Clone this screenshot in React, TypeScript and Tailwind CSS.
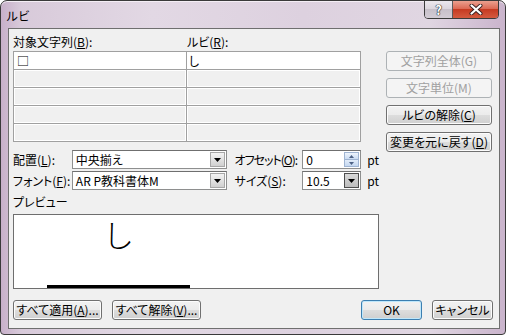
import React from 'react';

type BtnProps = {
  children: React.ReactNode;
  className?: string;
  disabled?: boolean;
  primary?: boolean;
};

const Btn: React.FC<BtnProps> = ({ children, className = '', disabled, primary }) => {
  if (disabled) {
    return (
      <div
        className={`h-[20px] flex items-center justify-center rounded-[3px] border border-[#adb2b5] bg-[#f4f4f4] text-[#a0a0a0] whitespace-nowrap ${className}`}
      >
        {children}
      </div>
    );
  }
  return (
    <div
      className={`h-[20px] flex items-center justify-center rounded-[3px] border whitespace-nowrap text-black bg-[linear-gradient(180deg,#f2f2f2_0%,#ebebeb_50%,#dddddd_50%,#cfcfcf_100%)] ${
        primary
          ? 'border-[#3c7fb1] shadow-[inset_0_0_0_1px_#bfe7fb]'
          : 'border-[#707070] shadow-[inset_0_0_0_1px_#fcfcfc]'
      } ${className}`}
    >
      {children}
    </div>
  );
};

const U: React.FC<{ children: React.ReactNode }> = ({ children }) => (
  <span className="underline underline-offset-[1px] decoration-1">{children}</span>
);

const DropArrow: React.FC<{ pressed?: boolean }> = ({ pressed }) => (
  <div
    className={`w-[15px] h-[15px] flex items-center justify-center border ${
      pressed
        ? 'border-[#4d4d4d] bg-[linear-gradient(180deg,#d8d8d8,#bdbdbd)]'
        : 'border-[#a7a7a7] bg-[linear-gradient(180deg,#f3f3f3_0%,#e2e2e2_50%,#d0d0d0_100%)]'
    }`}
  >
    <svg width="7" height="4" viewBox="0 0 7 4">
      <path d="M0 0h7L3.5 4z" fill="#000" />
    </svg>
  </div>
);

const Combo: React.FC<{ value: string; className?: string; pressed?: boolean }> = ({ value, className = '', pressed }) => (
  <div
    className={`h-[19px] flex items-center p-px bg-white border border-[#8e8f8f] border-t-[#6f6f6f] ${className}`}
  >
    <span className="flex-1 pl-[2px] leading-[15px] whitespace-nowrap">{value}</span>
    <DropArrow pressed={pressed} />
  </div>
);

const Spin: React.FC<{ value: string }> = ({ value }) => (
  <div className="w-[59px] h-[19px] flex items-center p-px bg-white border border-[#8e8f8f] border-t-[#6f6f6f]">
    <span className="flex-1 pl-[2px] leading-[15px]">{value}</span>
    <div className="w-[15px] h-[15px] flex flex-col">
      <div className="h-[8px] flex items-center justify-center border border-[#9fb4d2] bg-[linear-gradient(180deg,#eef4fc,#c9dbf2)]">
        <svg width="5" height="3" viewBox="0 0 5 3">
          <path d="M0 3h5L2.5 0z" fill="#4d6185" />
        </svg>
      </div>
      <div className="h-[7px] flex items-center justify-center border border-t-0 border-[#9fb4d2] bg-[linear-gradient(180deg,#e2ecf9,#c4d7f0)]">
        <svg width="5" height="3" viewBox="0 0 5 3">
          <path d="M0 0h5L2.5 3z" fill="#4d6185" />
        </svg>
      </div>
    </div>
  </div>
);

const App: React.FC = () => {
  const rows = [0, 1, 2, 3];

  return (
    <div className="w-[506px] h-[335px] flex flex-col rounded-t-[7px] rounded-b-[4px] border border-[#3a3a3a] bg-[linear-gradient(90deg,#c8b0ca_0%,#d8cada_4%,#e2d8e4_30%,#ddd1df_60%,#e0d6e2_85%,#cab4cc_100%)] shadow-[inset_0_1px_0_#f4eef5] font-['Noto_Sans_CJK_JP','Noto_Sans',sans-serif] text-[12px] text-black overflow-hidden">
      {/* title bar */}
      <div className="h-[27px] flex items-start pl-[5px] pr-[6px]">
        <span className="mt-[7px] leading-[16px]">ルビ</span>
        <div className="ml-auto -mt-px flex h-[19px] rounded-b-[4px] border border-[#3b3b3b] overflow-hidden">
          <div className="w-[28px] flex items-center justify-center bg-[linear-gradient(180deg,#ece8ee_0%,#dcd6de_45%,#c7c0ca_50%,#d3ccd5_100%)] border-r border-[#5c5c5c]">
            <span className="text-[13px] leading-[13px] font-bold text-white [text-shadow:0_0_1px_#222,0_0_1px_#222,0_0_1px_#222]">?</span>
          </div>
          <div className="w-[45px] flex items-center justify-center bg-[linear-gradient(180deg,#eba08f_0%,#dc6a55_45%,#c63b22_50%,#d45a40_100%)]">
            <svg width="14" height="11" viewBox="0 0 14 11">
              <path d="M2.5 1.5l9 8M11.5 1.5l-9 8" stroke="#3a2020" strokeWidth="4" strokeLinecap="round" />
              <path d="M2.5 1.5l9 8M11.5 1.5l-9 8" stroke="#fff" strokeWidth="2.2" strokeLinecap="round" />
            </svg>
          </div>
        </div>
      </div>

      {/* client area */}
      <div className="flex-1 ml-[7px] mr-[5px] mb-[5px] border border-[#6f6f6f] bg-[#f0f0f0] pl-[4px] pr-[6px] pt-[4px] flex flex-col [font-feature-settings:'palt']">
        <div className="flex">
          {/* left column */}
          <div className="w-[366px] flex flex-col">
            <div className="h-[17px] flex items-center leading-[17px]">
              <span className="w-[174px]">
                対象文字列(<U>B</U>):
              </span>
              <span>
                ルビ(<U>R</U>):
              </span>
            </div>

            <div className="mt-px w-[348px] grid grid-cols-[172px_173px] gap-px bg-[#a0a0a0] border border-[#a0a0a0]">
              <div className="h-[17px] bg-white pl-[3px] leading-[17px]">□</div>
              <div className="h-[17px] bg-white pl-[2px] leading-[17px]">し</div>
              {rows.map((r) => (
                <React.Fragment key={r}>
                  <div className="h-[17px] bg-[#f0f0f0] border border-white" />
                  <div className="h-[17px] bg-[#f0f0f0] border border-white" />
                </React.Fragment>
              ))}
            </div>

            <div className="mt-[8px] h-[19px] flex items-center">
              <span className="w-[59px] whitespace-nowrap">
                配置(<U>L</U>):
              </span>
              <Combo value="中央揃え" className="w-[155px]" />
              <span className="ml-[8px] w-[68px] whitespace-nowrap tracking-[-1px]">
                オフセット(<U>O</U>):
              </span>
              <Spin value="0" />
              <span className="ml-[6px]">pt</span>
            </div>

            <div className="mt-[2px] h-[19px] flex items-center">
              <span className="w-[59px] whitespace-nowrap">
                フォント(<U>F</U>):
              </span>
              <Combo value="AR P教科書体M" className="w-[155px]" />
              <span className="ml-[8px] w-[68px] whitespace-nowrap">
                サイズ(<U>S</U>):
              </span>
              <Combo value="10.5" className="w-[59px]" pressed />
              <span className="ml-[6px]">pt</span>
            </div>

            <div className="mt-[3px] h-[17px] leading-[17px]">プレビュー</div>

            <div className="mt-[4px] h-[75px] w-[366px] border border-[#6e6e6e] bg-white flex">
              <div className="ml-[33px] w-[143px] flex flex-col items-center">
                <span className="mt-[3px] text-[31px] leading-[31px] font-light">し</span>
                <div className="mt-auto h-[3px] w-full bg-black" />
              </div>
            </div>
          </div>

          {/* right column */}
          <div className="ml-[7px] w-[106px] pt-[18px] flex flex-col gap-[7px]">
            <Btn disabled>文字列全体(G)</Btn>
            <Btn disabled>文字単位(M)</Btn>
            <Btn>
              ルビの解除(<U>C</U>)
            </Btn>
            <Btn>
              変更を元に戻す(<U>D</U>)
            </Btn>
          </div>
        </div>

        {/* bottom buttons */}
        <div className="mt-[11px] flex">
          <Btn className="w-[89px]">
            すべて適用(<U>A</U>)...
          </Btn>
          <Btn className="ml-[10px] w-[89px]">
            すべて解除(<U>V</U>)...
          </Btn>
          <Btn primary className="ml-auto w-[61px]">
            OK
          </Btn>
          <Btn className="ml-[10px] w-[61px]">キャンセル</Btn>
        </div>
      </div>
    </div>
  );
};

export default App;
